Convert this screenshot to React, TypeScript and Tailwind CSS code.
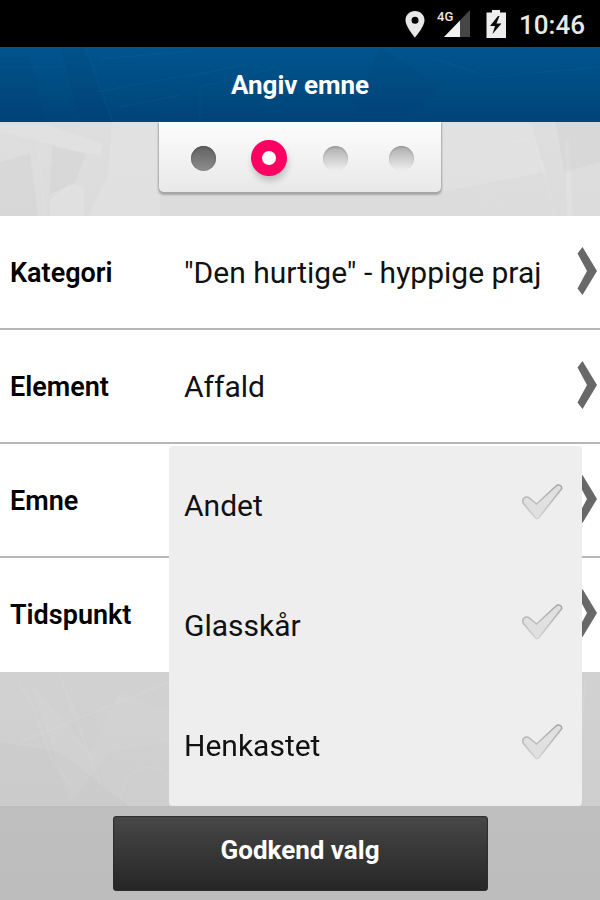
import { useState } from "react";
import clsx from "clsx";

const fields = [
  { id: "kategori", label: "Kategori", value: '"Den hurtige" - hyppige praj' },
  { id: "element", label: "Element", value: "Affald" },
  { id: "emne", label: "Emne", value: "" },
  { id: "tidspunkt", label: "Tidspunkt", value: "" },
];

const topics = ["Andet", "Glasskår", "Henkastet"];

function StatusBar() {
  return (
    <div className="flex h-[47px] flex-none items-center justify-end bg-black pr-[15px] text-[#e8e8e8]">
      <svg className="mr-3 h-7 w-5" viewBox="0 0 20 28" fill="currentColor">
        <path
          fillRule="evenodd"
          d="M10 1C4.600 1 .5 5 .5 10.200c0 6.300 9.500 17.300 9.500 17.300s9.500-11 9.500-17.300C19.500 5 15.400 1 10 1Zm0 5.800a3.500 3.500 0 1 1 0 7 3.500 3.500 0 0 1 0-7Z"
        />
      </svg>
      <div className="relative mr-[15px] h-7 w-[34px]">
        <svg className="h-7 w-[34px]" viewBox="0 0 34 28">
          <path d="M33 0v27H7Z" fill="#464646" />
          <path d="M23 10.400V27H7Z" fill="#f2f2f2" />
        </svg>
        <span className="absolute top-0 left-0 text-[13px] leading-[14px] font-medium">
          4G
        </span>
      </div>
      <svg className="mr-[13px] h-7 w-5" viewBox="0 0 20 28">
        <path d="M6 0h8v2.500h6V28H.5V2.500H6Z" fill="#ededed" />
        <path d="M12 6 4 16h5l-2.500 8L15.500 13.500h-5L13.500 6Z" fill="#0a0a0a" />
      </svg>
      <span className="pt-0.5 text-[26px] leading-[30px] font-medium">10:46</span>
    </div>
  );
}

// Faint street map behind the whole page
function MapTexture() {
  return (
    <svg
      className="absolute inset-0 h-full w-full"
      viewBox="0 0 600 778"
      preserveAspectRatio="none"
      aria-hidden="true"
    >
      <g fill="#fff" opacity=".12">
        <path d="M0 2h45l58 20-2 12-28-6L0 10Z" />
        <path d="M112 0h48v94H88l20-40Z" />
        <path d="M440 0h90l16 50-106 20Z" />
        <path d="M50 94V78l20-18 14 6v28Z" />
        <path d="M565 18h4l4 76h-6Z" />
        <path d="M30 560l60 70 30-60 50 20v30l-60 10-40 50Z" opacity=".4" />
      </g>
      <g fill="none" stroke="#fff" strokeWidth="1.500" opacity=".08">
        <path d="M38 20 45 94M0 50l100-22M510 20l30-4M530 0l25 94M470 94l20-20 20 20" />
        <path d="M18 560c30 40 20 70 55 105M60 552l40 110M120 684c0-50 50-50 60-10M20 620l150-60M585 560l-8 124" />
      </g>
      <g fill="#888" opacity=".06">
        <path d="M0 40l30-8 8 62H0ZM52 24l34 8-12 30-24 10ZM555 0h45v40l-35 10Z" />
        <path d="M0 620l60 10 70 55H0Z" opacity=".5" />
      </g>
    </svg>
  );
}

function HeaderTexture() {
  return (
    <svg
      className="absolute inset-0 h-full w-full"
      viewBox="0 0 600 75"
      preserveAspectRatio="none"
      aria-hidden="true"
    >
      <path
        d="M0 10h30l16 65H0ZM60 0h25l25 75H80ZM380 0l60 40-40 35h-50Z"
        fill="#003a6b"
        opacity=".1"
      />
      <path
        d="M85 0l28 75M100 12l90-8M95 45l110-20M190 30l60-14M200 75V40l80-20M0 20h60M120 60l60-12M430 10l60 20 110-10"
        fill="none"
        stroke="#2f7db8"
        opacity=".12"
      />
    </svg>
  );
}

function Steps() {
  return (
    <ol
      aria-label="Trin"
      className="mx-auto flex h-[70px] w-[282px] items-center rounded-b-[5px] bg-linear-to-b from-[#fdfdfd] to-[#e8e8e8] pt-0.5 pl-[11px] shadow-[0_2px_2px_1px_#a6a6a6]"
    >
      <li className="grid w-[66px] place-items-center">
        <span className="size-[25px] rounded-full bg-linear-to-b from-[#626262] to-[#8e8e8e] shadow-[inset_0_1px_2px_#505050]" />
      </li>
      <li className="grid w-[66px] place-items-center" aria-current="step">
        <span className="size-9 rounded-full border-[11px] border-[#ff0062] bg-white shadow-[1px_5px_6px_#00000030]" />
      </li>
      <li className="grid w-[66px] place-items-center">
        <span className="size-[25px] rounded-full bg-linear-to-b from-[#adadad] to-[#f0f0f0] shadow-[inset_0_1px_2px_#00000030]" />
      </li>
      <li className="grid w-[66px] place-items-center">
        <span className="size-[25px] rounded-full bg-linear-to-b from-[#adadad] to-[#f0f0f0] shadow-[inset_0_1px_2px_#00000030]" />
      </li>
    </ol>
  );
}

function Chevron() {
  return (
    <svg className="h-12 w-5 flex-none" viewBox="0 0 20 48" fill="#686868">
      <path d="M5.500 0 20 24 5.500 48 .5 41.500 10 24 .5 6.500Z" />
    </svg>
  );
}

function Check({ active }: { active: boolean }) {
  return (
    <svg className="h-9 w-[42px]" viewBox="0 0 42 36">
      <defs>
        <linearGradient id="check-edge" x1="0" y1="0" x2="0" y2="1">
          <stop offset="0" stopColor="#a4a4a4" />
          <stop offset="1" stopColor="#d2d2d2" />
        </linearGradient>
      </defs>
      <path
        d="M2.500 14.500C4 12.500 7 12.500 9 14.500L15.500 20 35 2C37.500-.2 41.500 1.500 40.500 5L18 33.500Q16 35.500 14 33.500L2.500 19.500Q1 17 2.500 14.500Z"
        fill={active ? "#ff0062" : "#e0e0e0"}
        stroke="url(#check-edge)"
        strokeWidth="1.500"
      />
    </svg>
  );
}

function TopicMenu() {
  const [selected, setSelected] = useState<string[]>([]);

  const toggle = (topic: string) =>
    setSelected((current) =>
      current.includes(topic)
        ? current.filter((item) => item !== topic)
        : [...current, topic],
    );

  return (
    <div className="absolute top-0.5 right-[18px] left-[169px] z-10 rounded-[4px] bg-[#eeeeee]">
      {topics.map((topic) => (
        <label
          key={topic}
          className="flex h-[120px] cursor-pointer items-center justify-between pr-[19px] pl-[15px] text-[30px] leading-9 text-[#111111]"
        >
          {topic}
          <input
            type="checkbox"
            className="sr-only"
            checked={selected.includes(topic)}
            onChange={() => toggle(topic)}
          />
          <span className="pb-2">
            <Check active={selected.includes(topic)} />
          </span>
        </label>
      ))}
    </div>
  );
}

export default function App() {
  const [open, setOpen] = useState("emne");

  return (
    <div className="flex min-h-screen flex-col bg-[#d4d4d4] font-[Roboto,sans-serif] text-black">
      <StatusBar />
      <header className="relative flex h-[75px] flex-none items-center justify-center bg-linear-to-b from-[#00558f] to-[#004478]">
        <HeaderTexture />
        <h1 className="relative text-[26px] leading-8 font-bold text-white">
          Angiv emne
        </h1>
      </header>

      <div className="relative flex flex-1 flex-col bg-linear-to-b from-[#dedede] to-[#cccccc]">
        <MapTexture />
        <main className="relative flex-1">
          <div className="h-[94px]">
            <Steps />
          </div>
          <ul className="bg-white">
            {fields.map((field, index) => (
              <li
                key={field.id}
                className={clsx(
                  "relative h-[114px]",
                  index < fields.length - 1 && "border-b-2 border-[#b6b6b6]",
                )}
              >
                <button
                  type="button"
                  aria-expanded={open === field.id}
                  onClick={() => setOpen(open === field.id ? "" : field.id)}
                  className="flex h-[110px] w-full items-center pr-[3px] pl-[10px] text-left"
                >
                  <span className="w-[174px] flex-none pt-1 text-[27px] leading-9 font-semibold">
                    {field.label}
                  </span>
                  <span className="flex-1 pt-1 text-[30px] leading-9 whitespace-nowrap text-[#111111]">
                    {field.value}
                  </span>
                  <Chevron />
                </button>
                {field.id === "emne" && open === "emne" && <TopicMenu />}
              </li>
            ))}
          </ul>
        </main>

        <footer className="relative flex h-[94px] flex-none items-center justify-center bg-[#00000012]">
          <button
            type="button"
            className="h-[75px] w-5/8 rounded-[4px] bg-linear-to-b from-[#484848] to-[#262626] pb-1.5 text-[26px] leading-8 font-bold text-white shadow-[inset_0_0_1px_1px_#2e2e2e]"
          >
            Godkend valg
          </button>
        </footer>
      </div>
    </div>
  );
}
